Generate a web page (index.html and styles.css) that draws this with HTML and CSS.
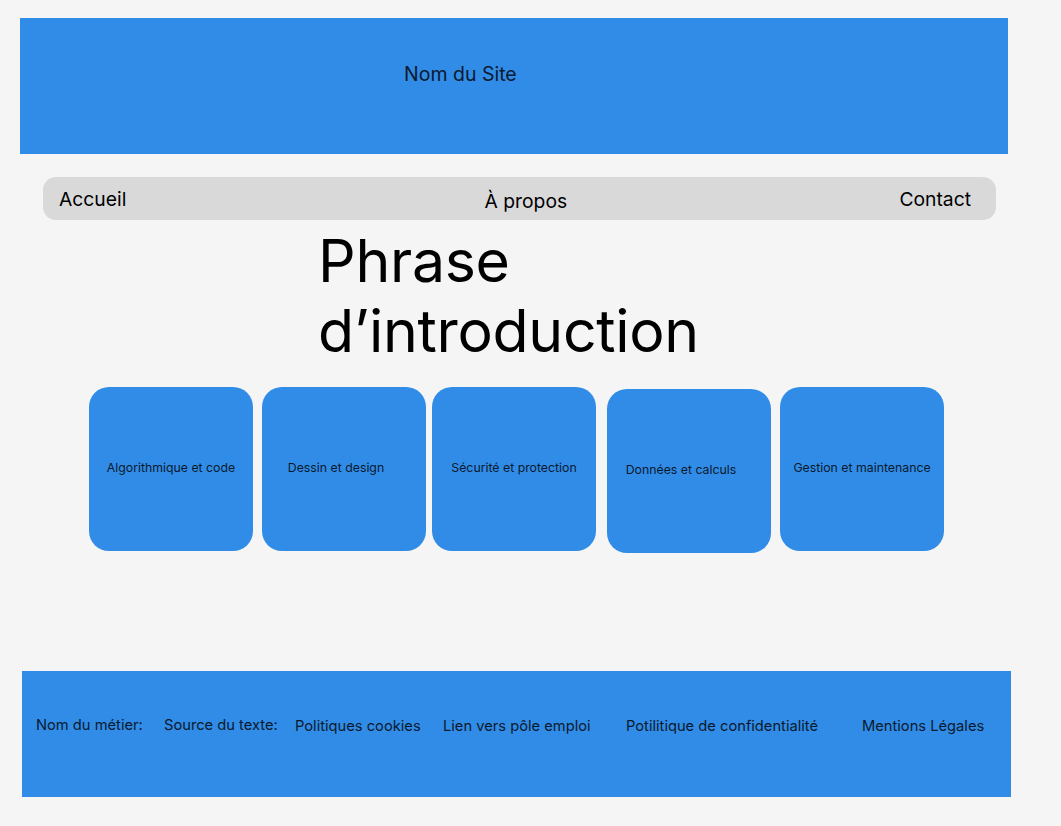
FILE: index.html
```html
<!DOCTYPE html>
<html lang="fr">
<head>
<meta charset="utf-8">
<title>Nom du Site</title>
<link rel="stylesheet" href="styles.css">
</head>
<body>
<div class="page">
  <header class="site-header">
    <span class="site-name">Nom du Site</span>
  </header>
  <nav class="main-nav">
    <a class="nav-link" href="#">Accueil</a>
    <a class="nav-link nav-link--mid" href="#">À propos</a>
    <a class="nav-link" href="#">Contact</a>
  </nav>
  <h1 class="intro">Phrase<br>d’introduction</h1>
  <section class="cards">
    <div class="card">Algorithmique et code</div>
    <div class="card card--left">Dessin et design</div>
    <div class="card">Sécurité et protection</div>
    <div class="card card--low card--left">Données et calculs</div>
    <div class="card">Gestion et maintenance</div>
  </section>
  <footer class="site-footer">
    <span class="foot-item foot-item--up">Nom du métier:</span>
    <span class="foot-item foot-item--up">Source du texte:</span>
    <span class="foot-item">Politiques cookies</span>
    <span class="foot-item">Lien vers pôle emploi</span>
    <span class="foot-item">Potilitique de confidentialité</span>
    <span class="foot-item">Mentions Légales</span>
  </footer>
</div>
</body>
</html>
```

FILE: styles.css
```css
html, body {
  margin: 0;
  padding: 0;
  background: #f5f5f5;
}
body {
  font-family: Inter, "Noto Sans", "Liberation Sans", sans-serif;
  color: #000;
}
.page {
  display: flex;
  flex-direction: column;
  align-items: flex-start;
  padding-top: 18px;
}
.site-header {
  margin-left: 20px;
  width: 988px;
  height: 136px;
  background: #318ce7;
  box-sizing: border-box;
  padding: 44px 0 0 384px;
}
.site-name {
  font-size: 19.5px;
  line-height: 24px;
  color: #0a1a2e;
}
.main-nav {
  margin-top: 23px;
  margin-left: 43px;
  width: 953px;
  height: 43px;
  background: #d9d9d9;
  border-radius: 13px;
  box-sizing: border-box;
  padding: 0 25px 0 16px;
  display: flex;
  align-items: center;
  justify-content: space-between;
}
.nav-link {
  font-size: 19.3px;
  line-height: 24px;
  color: #000;
  text-decoration: none;
}
.nav-link--mid {
  margin-left: 26px;
  margin-top: 4px;
}
.intro {
  margin: 6px 0 0 318px;
  font-size: 59px;
  font-weight: 400;
  line-height: 70px;
  letter-spacing: -0.3px;
}
.cards {
  margin: 21px 0 0 89px;
  display: flex;
  align-items: flex-start;
  gap: 9px;
}
.card {
  width: 164px;
  height: 164px;
  background: #318ce7;
  border-radius: 20px;
  display: flex;
  align-items: center;
  justify-content: center;
  box-sizing: border-box;
  padding-bottom: 4px;
  font-size: 12.3px;
  color: #0a1a2e;
}
.card:nth-child(3) { margin-left: -3px; }
.card:nth-child(4) { margin-left: 2px; }
.card--left {
  padding-right: 16px;
}
.card--low {
  margin-top: 2px;
}
.site-footer {
  margin-top: 118px;
  margin-left: 22px;
  width: 989px;
  height: 126px;
  background: #318ce7;
  box-sizing: border-box;
  padding: 45px 0 0 14px;
  display: grid;
  grid-template-columns: 128px 131px 148px 183px 236px auto;
  align-items: start;
}
.foot-item {
  font-size: 14.7px;
  line-height: 20px;
  color: #0a1a2e;
  white-space: nowrap;
}
.foot-item--up {
  margin-top: -1px;
}
```
